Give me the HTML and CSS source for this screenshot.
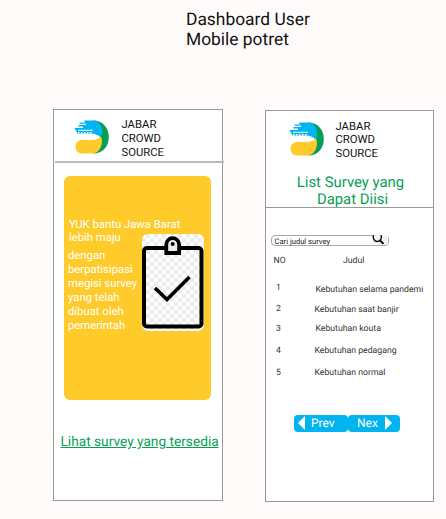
FILE: index.html
```html
<!DOCTYPE html>
<html lang="id">
<head>
<meta charset="utf-8">
<title>Jabar Crowd Source</title>
<link rel="stylesheet" href="styles.css">
</head>
<body>
<svg class="defs" width="0" height="0" aria-hidden="true">
  <symbol id="logo" viewBox="0 0 36 34">
    <path fill="#079e55" d="M19 .5C29 .5 34.800 8 34.800 17S29 33.500 19 33.500z"/>
    <path fill="#00b4ef" d="M10 .5h9.500c5.500.3 8.500 5.500 8.500 10 0 3-.4 5.500-1.300 7.500-2-2.500-5.500-4-9.500-4H3.500L2.200 11 .3 8H9V6.600H4.500V5H12V3.800H5.500V2.400h5.500z"/>
    <path fill="#fff" d="M3 13.500h14c4 0 8 1.500 9.700 4.500l-6 4H8z"/>
    <path fill="#ffcb2b" d="M8.500 20h9.500c4 0 7-1.200 8.800-3.500.8 1 1.200 2.600 1.200 4.500 0 6-3.500 12-9 12.500H8.500c-9.300 0-9.300-13.500 0-13.500z"/>
    <path fill="none" stroke="#fff" stroke-width="1" d="M4 10.300h15"/>
    <path fill="none" stroke="#fff" stroke-width="1.500" stroke-dasharray="1.500 1.500" d="M4 12.700h14"/>
  </symbol>
</svg>
<h1 class="page-title">Dashboard User<br>Mobile potret</h1>
<main class="screens">
  <section class="phone home">
    <header class="brand">
      <svg class="logo"><use href="#logo"/></svg>
      <div class="brand-name">JABAR<br>CROWD<br>SOURCE</div>
    </header>
    <div class="card">
      <p class="lead">YUK bantu Jawa Barat<br>lebih maju</p>
      <div class="card-row">
        <p class="copy">dengan<br>berpatisipasi<br>megisi survey<br>yang telah<br>dibuat oleh<br>pemerintah</p>
        <div class="clipboard">
          <svg width="62" height="97" viewBox="0 0 62 97" fill="none" stroke="#000">
            <rect x="2" y="14" width="57.500" height="78.500" rx="3" stroke-width="4"/>
            <path fill="#eee" stroke-width="3.800" d="M24.300 19V10.500a6.400 6.400 0 0 1 12.800 0V19z"/>
            <circle cx="30.700" cy="10" r="2" fill="#000" stroke="none"/>
            <path stroke-width="3.600" d="M13 54l12 11.500L47.500 43"/>
          </svg>
        </div>
      </div>
    </div>
    <a class="survey-link">Lihat survey yang tersedia</a>
  </section>
  <section class="phone list">
    <header class="brand">
      <svg class="logo"><use href="#logo"/></svg>
      <div class="brand-name">JABAR<br>CROWD<br>SOURCE</div>
    </header>
    <h2 class="list-title">List Survey yang<br><span>Dapat Diisi</span></h2>
    <div class="search">
      <span>Cari judul survey</span>
      <svg width="16" height="10" viewBox="0 0 16 10" fill="none" stroke="#000"><path fill="#f4f4f4" stroke="none" d="M0 0h16v9H0z"/><path stroke-width="1.300" d="M1.500 0C.5 3.500 2.500 6.500 5.500 6.500S10 3.500 9 0"/><path stroke-width="1.900" d="M7.500 4.800l4 4"/></svg>
    </div>
    <div class="row head"><span>NO</span><span>Judul</span></div>
    <div class="row r1"><span>1</span><span>Kebutuhan selama pandemi</span></div>
    <div class="row r2"><span>2</span><span>Kebutuhan saat banjir</span></div>
    <div class="row r3"><span>3</span><span>Kebutuhan kouta</span></div>
    <div class="row r4"><span>4</span><span>Kebutuhan pedagang</span></div>
    <div class="row r5"><span>5</span><span>Kebutuhan normal</span></div>
    <nav class="pager">
      <button class="prev"><svg width="7" height="14" viewBox="0 0 7 14"><path fill="#fff" d="M7 0v14L0 7z"/></svg>Prev</button>
      <button class="next">Nex<svg width="7" height="14" viewBox="0 0 7 14"><path fill="#fff" d="M0 0v14l7-7z"/></svg></button>
    </nav>
  </section>
</main>
</body>
</html>
```
FILE: styles.css
```css
* { box-sizing: border-box; margin: 0; padding: 0; }
body {
  width: 446px;
  height: 519px;
  overflow: hidden;
  background: #fffbfa;
  color: #111;
  font-family: Roboto, "Liberation Sans", sans-serif;
  text-rendering: geometricPrecision;
}
.defs { display: block; }
.page-title {
  height: 108px;
  padding: 10px 0 0 186px;
  font-size: 17.400px;
  font-weight: 400;
  line-height: 20px;
}
.screens { display: flex; align-items: flex-start; gap: 42px; padding-left: 53px; }
.phone {
  display: flex;
  flex-direction: column;
  width: 170px;
  height: 392px;
  border: 1px solid #999;
  background: #fff;
}
.home { margin-top: 1px; }
.list { margin-top: 2px; width: 169px; }
.brand { display: flex; flex: none; }
.logo { flex: none; width: 36px; height: 34px; }
.brand-name { font-size: 11.300px; line-height: 13.800px; }
.home .brand {
  width: 169px;
  height: 53px;
  margin-left: 1px;
  padding: 10px 0 0 19px;
  border-bottom: 2px solid #bababa;
}
.home .brand-name { margin: -2px 0 0 11.500px; }
.card {
  flex: none;
  width: 147px;
  height: 224px;
  margin: 13px 0 0 10px;
  padding: 41.500px 0 0 5px;
  border-radius: 6px;
  background: #ffcb2b;
  color: #fff;
  font-size: 11.300px;
  line-height: 13.900px;
}
.lead { white-space: nowrap; }
.card-row { display: flex; }
.copy { flex: none; width: 74px; margin: 4px 0 0 -1px; white-space: nowrap; }
.clipboard {
  width: 62px;
  height: 97px;
  margin-top: -11px;
  border-radius: 6px;
  background: repeating-conic-gradient(#ececec 0 25%, #fff 0 50%) 0 0 / 8px 8px;
}
.clipboard svg { display: block; }
.survey-link {
  align-self: flex-start;
  margin: 34px 0 0 6.500px;
  color: #079e55;
  font-size: 13.700px;
  line-height: 17px;
  white-space: nowrap;
  text-decoration: underline;
}
.list .brand { height: 62px; padding: 11px 0 0 23px; }
.list .brand-name { margin: -2.500px 0 0 10.500px; }
.list-title {
  flex: none;
  height: 35px;
  padding: 1px 0 0 2px;
  border-bottom: 1px solid #999;
  color: #079e55;
  font-size: 14.900px;
  font-weight: 400;
  line-height: 17px;
  text-align: center;
  white-space: nowrap;
}
.list-title span { padding-left: 4px; }
.search {
  display: flex;
  justify-content: space-between;
  width: 118px;
  height: 11px;
  margin: 27px 0 0 5px;
  padding: 0 0 0 2.500px;
  border: 1px solid #a9a9a9;
  border-radius: 4px;
  color: #222;
  font-size: 7.600px;
  line-height: 11px;
}
.search svg { margin-top: -1px; }
.row {
  display: flex;
  height: 12px;
  color: #333;
  font-size: 8.700px;
  line-height: 12px;
  white-space: nowrap;
}
.row span:first-child { flex: none; width: 38.500px; }
.row.head { margin: 9px 0 0 7.500px; }
.row.head span:first-child { width: 69.500px; }
.r1 { margin: 15px 0 0 10px; }
.row.r1 span:first-child, .row.r3 span:first-child { width: 39.500px; }
.r1 span:last-child { padding-top: 2px; }
.r2 { margin: 9px 0 0 10px; }
.r2 span:last-child { padding-top: 1px; }
.r3 { margin: 8px 0 0 10px; }
.r4 { margin: 10px 0 0 10px; }
.r5 { margin: 10px 0 0 10px; }
.pager { display: flex; margin: 36px 0 0 28px; }
.pager button {
  display: flex;
  align-items: center;
  height: 16.500px;
  border: 0;
  border-radius: 4px;
  background: #00b4ef;
  color: #fff;
  font: 12px/17px Roboto, sans-serif;
  text-rendering: geometricPrecision;
}
.prev { width: 54px; padding-left: 4px; gap: 6px; }
.next { width: 52px; padding-left: 9px; gap: 7px; }
```
